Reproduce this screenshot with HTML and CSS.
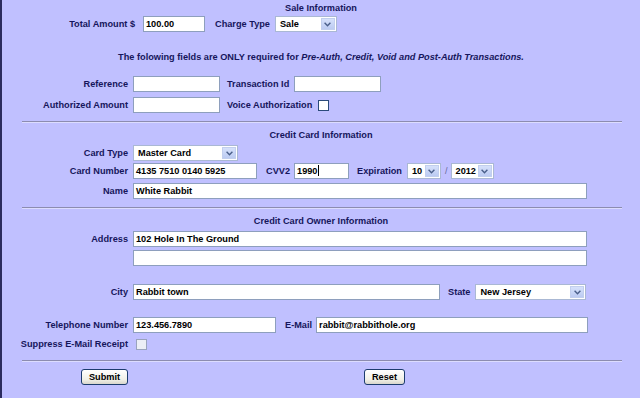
FILE: index.html
```html
<!DOCTYPE html>
<html>
<head>
<meta charset="utf-8">
<link rel="stylesheet" href="styles.css">
</head>
<body>
<div class="page">
  <div class="title t1">Sale Information</div>

  <div class="row r1">
    <span class="lbl lc1">Total Amount $</span>
    <div class="inp w62">100.00</div>
    <span class="lbl g-ct">Charge Type</span>
    <div class="sel w62"><span class="seltxt">Sale</span><span class="arrow"><svg width="7" height="5" viewBox="0 0 7 5"><path d="M0.6 0.8 L3.5 3.7 L6.4 0.8" stroke="#4a5f8a" stroke-width="1.4" fill="none"/></svg></span></div>
  </div>

  <div class="note">The folowing fields are ONLY required for <em>Pre-Auth, Credit, Void and Post-Auth Transactions.</em></div>

  <div class="row r-ref">
    <span class="lbl lc">Reference</span>
    <div class="inp w87"></div>
    <span class="lbl g-tx">Transaction Id</span>
    <div class="inp w87"></div>
  </div>

  <div class="row r-auth">
    <span class="lbl lc">Authorized Amount</span>
    <div class="inp w87"></div>
    <span class="lbl g-tx">Voice Authorization</span>
    <div class="chk"></div>
  </div>

  <div class="hr hr1"></div>

  <div class="title t2">Credit Card Information</div>

  <div class="row r-ctype">
    <span class="lbl lc">Card Type</span>
    <div class="sel w105"><span class="seltxt">Master Card</span><span class="arrow"><svg width="7" height="5" viewBox="0 0 7 5"><path d="M0.6 0.8 L3.5 3.7 L6.4 0.8" stroke="#4a5f8a" stroke-width="1.4" fill="none"/></svg></span></div>
  </div>

  <div class="row r-cnum">
    <span class="lbl lc">Card Number</span>
    <div class="inp w124">4135 7510 0140 5925</div>
    <span class="lbl g-cvv">CVV2</span>
    <div class="inp w55">1990<span class="caret"></span></div>
    <span class="lbl g-exp">Expiration</span>
    <div class="sel w34"><span class="seltxt">10</span><span class="arrow"><svg width="7" height="5" viewBox="0 0 7 5"><path d="M0.6 0.8 L3.5 3.7 L6.4 0.8" stroke="#4a5f8a" stroke-width="1.4" fill="none"/></svg></span></div>
    <span class="slash">/</span>
    <div class="sel w43"><span class="seltxt">2012</span><span class="arrow"><svg width="7" height="5" viewBox="0 0 7 5"><path d="M0.6 0.8 L3.5 3.7 L6.4 0.8" stroke="#4a5f8a" stroke-width="1.4" fill="none"/></svg></span></div>
  </div>

  <div class="row r-name">
    <span class="lbl lc">Name</span>
    <div class="inp w454">White Rabbit</div>
  </div>

  <div class="hr hr2"></div>

  <div class="title t3">Credit Card Owner Information</div>

  <div class="row r-addr">
    <span class="lbl lc">Address</span>
    <div class="inp w454">102 Hole In The Ground</div>
  </div>

  <div class="row r-addr2">
    <span class="lbl lc"></span>
    <div class="inp w454"></div>
  </div>

  <div class="row r-city">
    <span class="lbl lc">City</span>
    <div class="inp w307">Rabbit town</div>
    <span class="lbl g-st">State</span>
    <div class="sel w111"><span class="seltxt">New Jersey</span><span class="arrow"><svg width="7" height="5" viewBox="0 0 7 5"><path d="M0.6 0.8 L3.5 3.7 L6.4 0.8" stroke="#4a5f8a" stroke-width="1.4" fill="none"/></svg></span></div>
  </div>

  <div class="row r-tel">
    <span class="lbl lc">Telephone Number</span>
    <div class="inp w143">123.456.7890</div>
    <span class="lbl g-em">E-Mail</span>
    <div class="inp w272">rabbit@rabbithole.org</div>
  </div>

  <div class="row r-sup">
    <span class="lbl lc">Suppress E-Mail Receipt</span>
    <div class="chk chk-dis"></div>
  </div>

  <div class="hr hr3"></div>

  <div class="row r-btn">
    <div class="btn b-submit">Submit</div>
    <div class="btn b-reset">Reset</div>
  </div>
</div>
</body>
</html>
```

FILE: styles.css
```css
html, body {
  margin: 0;
  padding: 0;
  background: #c0c0ff;
}
.page {
  width: 638px;
  height: 398px;
  border-left: 2px solid #2c2c5e;
  background: #c0c0ff;
  font-family: "Liberation Sans", Arial, sans-serif;
  font-size: 9.2px;
  font-weight: bold;
  color: #16165c;
  overflow: hidden;
  display: flex;
  flex-direction: column;
}
.title {
  height: 13px;
  line-height: 13px;
  text-align: center;
}
.t1 { margin-top: 2px; }
.t2 { margin-top: 6px; }
.t3 { margin-top: 6px; }

.row {
  display: flex;
  align-items: center;
  height: 16px;
  flex: none;
}
.r1 { margin-top: 1px; }
.r-ref { margin-top: 12px; }
.r-auth { margin-top: 5px; }
.r-ctype { margin-top: 3px; }
.r-cnum { margin-top: 2px; }
.r-name { margin-top: 4px; }
.r-addr { margin-top: 3px; }
.r-addr2 { margin-top: 3px; }
.r-city { margin-top: 18px; }
.r-tel { margin-top: 17px; }
.r-sup { margin-top: 5px; height: 12px; }
.r-btn { margin-top: 7px; }

.note {
  margin-top: 19px;
  height: 13px;
  line-height: 13px;
  text-align: center;
}
.note em { font-style: italic; }

.lbl {
  white-space: nowrap;
  flex: none;
}
.lc1 {
  width: 133px;
  text-align: right;
  margin-right: 8px;
}
.lc {
  width: 126px;
  text-align: right;
  margin-right: 5px;
}
.g-ct { margin-left: 10px; margin-right: 5px; }
.g-tx { margin-left: 7px; margin-right: 5px; }
.g-cvv { margin-left: 9px; margin-right: 4px; }
.g-exp { margin-left: 8px; margin-right: 5px; }
.g-st { margin-left: 8px; margin-right: 5px; }
.g-em { margin-left: 9px; margin-right: 4px; }

.inp {
  box-sizing: border-box;
  height: 16px;
  border: 1px solid #8e9fbd;
  background: #ffffff;
  color: #000000;
  padding: 0 2px;
  line-height: 14px;
  white-space: nowrap;
  overflow: hidden;
  flex: none;
}
.caret {
  display: inline-block;
  width: 1px;
  height: 11px;
  background: #000;
  vertical-align: -2px;
  margin-left: 1px;
}
.w55 { width: 55px; }
.w62 { width: 62px; }
.w87 { width: 87px; }
.w124 { width: 124px; }
.w143 { width: 143px; }
.w272 { width: 272px; }
.w307 { width: 307px; }
.w454 { width: 454px; }
.w34 { width: 34px; }
.w43 { width: 43px; }
.w105 { width: 105px; }
.w111 { width: 111px; }

.sel {
  box-sizing: border-box;
  height: 16px;
  border: 1px solid #aab8d4;
  background: #ffffff;
  color: #000000;
  display: flex;
  align-items: center;
  padding: 1px;
  flex: none;
}
.seltxt {
  flex: 1;
  padding-left: 3px;
  white-space: nowrap;
  overflow: hidden;
  line-height: 12px;
}
.arrow {
  width: 14px;
  height: 12px;
  box-sizing: border-box;
  background: linear-gradient(#d6e1fb, #bccbf2);
  border: 1px solid #c2cfee;
  display: flex;
  align-items: center;
  justify-content: center;
  flex: none;
}
.slash {
  margin: 0 3px 0 4px;
  color: #6a6a9a;
  font-weight: normal;
}

.chk {
  box-sizing: border-box;
  width: 11px;
  height: 11px;
  border: 1px solid #2a4a7a;
  background: #ffffff;
  flex: none;
  margin-left: 1px;
}
.chk-dis {
  border-color: #9aa3bd;
  background: #eceef6;
  margin-left: 3px;
}

.hr {
  flex: none;
  margin-left: 20px;
  width: 600px;
  height: 0;
  border-top: 1px solid #8c8cb0;
  border-bottom: 1px solid #dcdcff;
}
.hr1 { margin-top: 8px; }
.hr2 { margin-top: 8px; }
.hr3 { margin-top: 10px; }

.btn {
  box-sizing: border-box;
  height: 16px;
  line-height: 14px;
  border: 1px solid #1c3c6e;
  border-radius: 3px;
  background: linear-gradient(#ffffff, #f0efe6 70%, #d8d6cc);
  color: #000000;
  text-align: center;
  flex: none;
}
.b-submit { margin-left: 79px; width: 47px; }
.b-reset { margin-left: 236px; width: 41px; }
```
